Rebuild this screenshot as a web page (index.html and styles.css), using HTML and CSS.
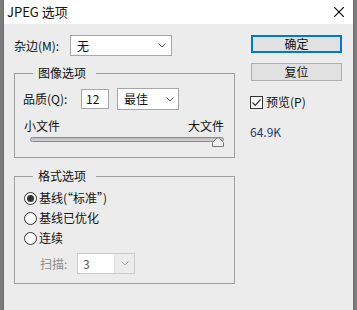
FILE: index.html
```html
<!DOCTYPE html>
<html lang="zh-CN">
<head>
<meta charset="UTF-8">
<title>JPEG 选项</title>
<link rel="stylesheet" href="styles.css">
</head>
<body>
<div class="win">
    <div class="titlebar">
        <span class="title">JPEG 选项</span>
        <svg class="close" width="10" height="10" viewBox="0 0 10 10"><path d="M0 0L10 10M10 0L0 10" stroke="#000" stroke-width="1.1"/></svg>
    </div>
    <div class="content">
        <div class="left">
            <div class="row matte">
                <span class="lbl lbl-matte">杂边(M):</span>
                <div class="select sel-matte">
                    <span>无</span>
                    <svg class="chev" width="8" height="5" viewBox="0 0 8 5"><path d="M0.5 0.5L4 4L7.5 0.5" fill="none" stroke="#555"/></svg>
                </div>
            </div>

            <div class="group g-image">
                <div class="legend">图像选项</div>
                <div class="row quality">
                    <span class="lbl lbl-quality">品质(Q):</span>
                    <div class="input">12</div>
                    <div class="select sel-quality">
                        <span>最佳</span>
                        <svg class="chev" width="8" height="5" viewBox="0 0 8 5"><path d="M0.5 0.5L4 4L7.5 0.5" fill="none" stroke="#555"/></svg>
                    </div>
                </div>
                <div class="scale"><span>小文件</span><span>大文件</span></div>
                <div class="slider">
                    <div class="track"></div>
                    <svg class="thumb" width="12" height="10" viewBox="0 0 12 10"><path d="M0.5 9.5V5.5L5 1Q6 0.2 7 1L11.5 5.5V9.5Z" fill="#f2f2f2" stroke="#7c7c7c"/></svg>
                </div>
            </div>

            <div class="group g-format">
                <div class="legend">格式选项</div>
                <div class="radio on"><span class="dot"></span>基线(“标准”)</div>
                <div class="radio"><span class="dot"></span>基线已优化</div>
                <div class="radio"><span class="dot"></span>连续</div>
                <div class="row scan">
                    <span class="lbl lbl-scan">扫描:</span>
                    <div class="select sel-scan">
                        <span class="val">3</span>
                        <span class="arrow"><svg width="8" height="5" viewBox="0 0 8 5"><path d="M0.5 0.5L4 4L7.5 0.5" fill="none" stroke="#a8a8a8"/></svg></span>
                    </div>
                </div>
            </div>
        </div>

        <div class="right">
            <div class="btn btn-ok">确定</div>
            <div class="btn">复位</div>
            <div class="check">
                <span class="box"><svg width="11" height="11" viewBox="0 0 11 11"><path d="M1.5 5.5L4.2 8.3L9.5 2.5" fill="none" stroke="#333" stroke-width="1.2"/></svg></span>
                预览(P)
            </div>
            <div class="size">64.9K</div>
        </div>
    </div>
</div>
</body>
</html>
```

FILE: styles.css
```css
*{
    margin:0;
    padding:0;
    box-sizing:border-box;
}
body{
    background:#7c7c7c;
    font-family:"Noto Sans CJK SC","Noto Sans",sans-serif;
    font-size:12px;
    line-height:16px;
    color:#111;
}
.win{
    width:351px;
    height:310px;
    margin-left:3px;
    border-left:1px solid #2a7bd2;
    border-right:1px solid #2a7bd2;
    background:#ececec;
}
.titlebar{
    height:24px;
    background:#fff;
    display:flex;
    align-items:center;
    justify-content:space-between;
    padding:0 9px 0 3px;
}
.title{
    font-size:13px;
    line-height:24px;
}
.content{
    display:flex;
    padding:11px 0 0 10px;
}
.left{
    width:221px;
}
.right{
    width:93px;
    margin-left:15px;
}
.row{
    display:flex;
    align-items:center;
}
.lbl{
    flex:none;
}
.lbl-matte{
    width:56px;
}
.select{
    display:flex;
    align-items:center;
    justify-content:space-between;
    background:#fff;
    border:1px solid #a6a6a6;
    padding:0 5px 0 6px;
}
.sel-matte{
    width:102px;
    height:21px;
}
.group{
    border:1px solid #a0a0a0;
    padding:0 10px 0 8px;
}
.legend{
    width:max-content;
    line-height:14px;
    margin:-8px 0 0 10px;
    padding:0 10px 0 5px;
    background:#ececec;
}
.g-image{
    margin-top:17px;
    padding-bottom:10px;
}
.quality{
    height:22px;
    margin-top:8px;
}
.lbl-quality{
    width:58px;
}
.input{
    width:28px;
    height:20px;
    border:1px solid #a6a6a6;
    background:#fff;
    padding-left:4px;
    line-height:18px;
}
.sel-quality{
    width:62px;
    height:22px;
    margin-left:8px;
    padding-right:4px;
}
.scale{
    display:flex;
    justify-content:space-between;
    margin-top:8px;
    padding-left:1px;
}
.slider{
    position:relative;
    height:10px;
    margin:1px 0 0 7px;
    width:194px;
}
.track{
    margin-top:3px;
    height:5px;
    border:1px solid #8a8a8a;
    border-radius:3px;
    background:linear-gradient(#b9b9b9,#d6d6d6);
}
.thumb{
    position:absolute;
    right:0;
    top:0;
}
.g-format{
    margin-top:18px;
    padding:0 10px 9px 9px;
}
.g-format .legend{
    margin-left:9px;
}
.radio{
    display:flex;
    align-items:center;
    height:20px;
}
.g-format .legend + .radio{
    margin-top:5px;
}
.dot{
    width:13px;
    height:13px;
    border:1px solid #333;
    border-radius:50%;
    background:#fff;
    margin-right:2px;
    display:flex;
    align-items:center;
    justify-content:center;
}
.radio.on .dot::after{
    content:"";
    width:7px;
    height:7px;
    border-radius:50%;
    background:#333;
}
.scan{
    height:21px;
    margin-top:5px;
    padding-left:16px;
}
.lbl-scan{
    width:37px;
    color:#8d8d8d;
}
.sel-scan{
    width:58px;
    height:21px;
    padding:0;
    border-color:#cacaca;
    background:#ececec;
    align-items:stretch;
}
.sel-scan .val{
    flex:1;
    background:#fff;
    border-right:1px solid #e2e2e2;
    padding-left:5px;
    line-height:19px;
    color:#555;
}
.sel-scan .arrow{
    width:19px;
    display:flex;
    align-items:center;
    justify-content:center;
}
.btn{
    width:91px;
    height:18px;
    margin-left:1px;
    border:1px solid #adadad;
    background:#e1e1e1;
    text-align:center;
    line-height:16px;
    margin-top:10px;
}
.btn-ok{
    margin-top:0;
    border:2px solid #0078d7;
    line-height:14px;
}
.check{
    display:flex;
    align-items:center;
    margin-top:13px;
    height:16px;
}
.box{
    width:13px;
    height:13px;
    border:1px solid #333;
    background:#fff;
    margin-right:3px;
    display:flex;
}
.size{
    margin-top:14px;
    color:#22396c;
}
```
